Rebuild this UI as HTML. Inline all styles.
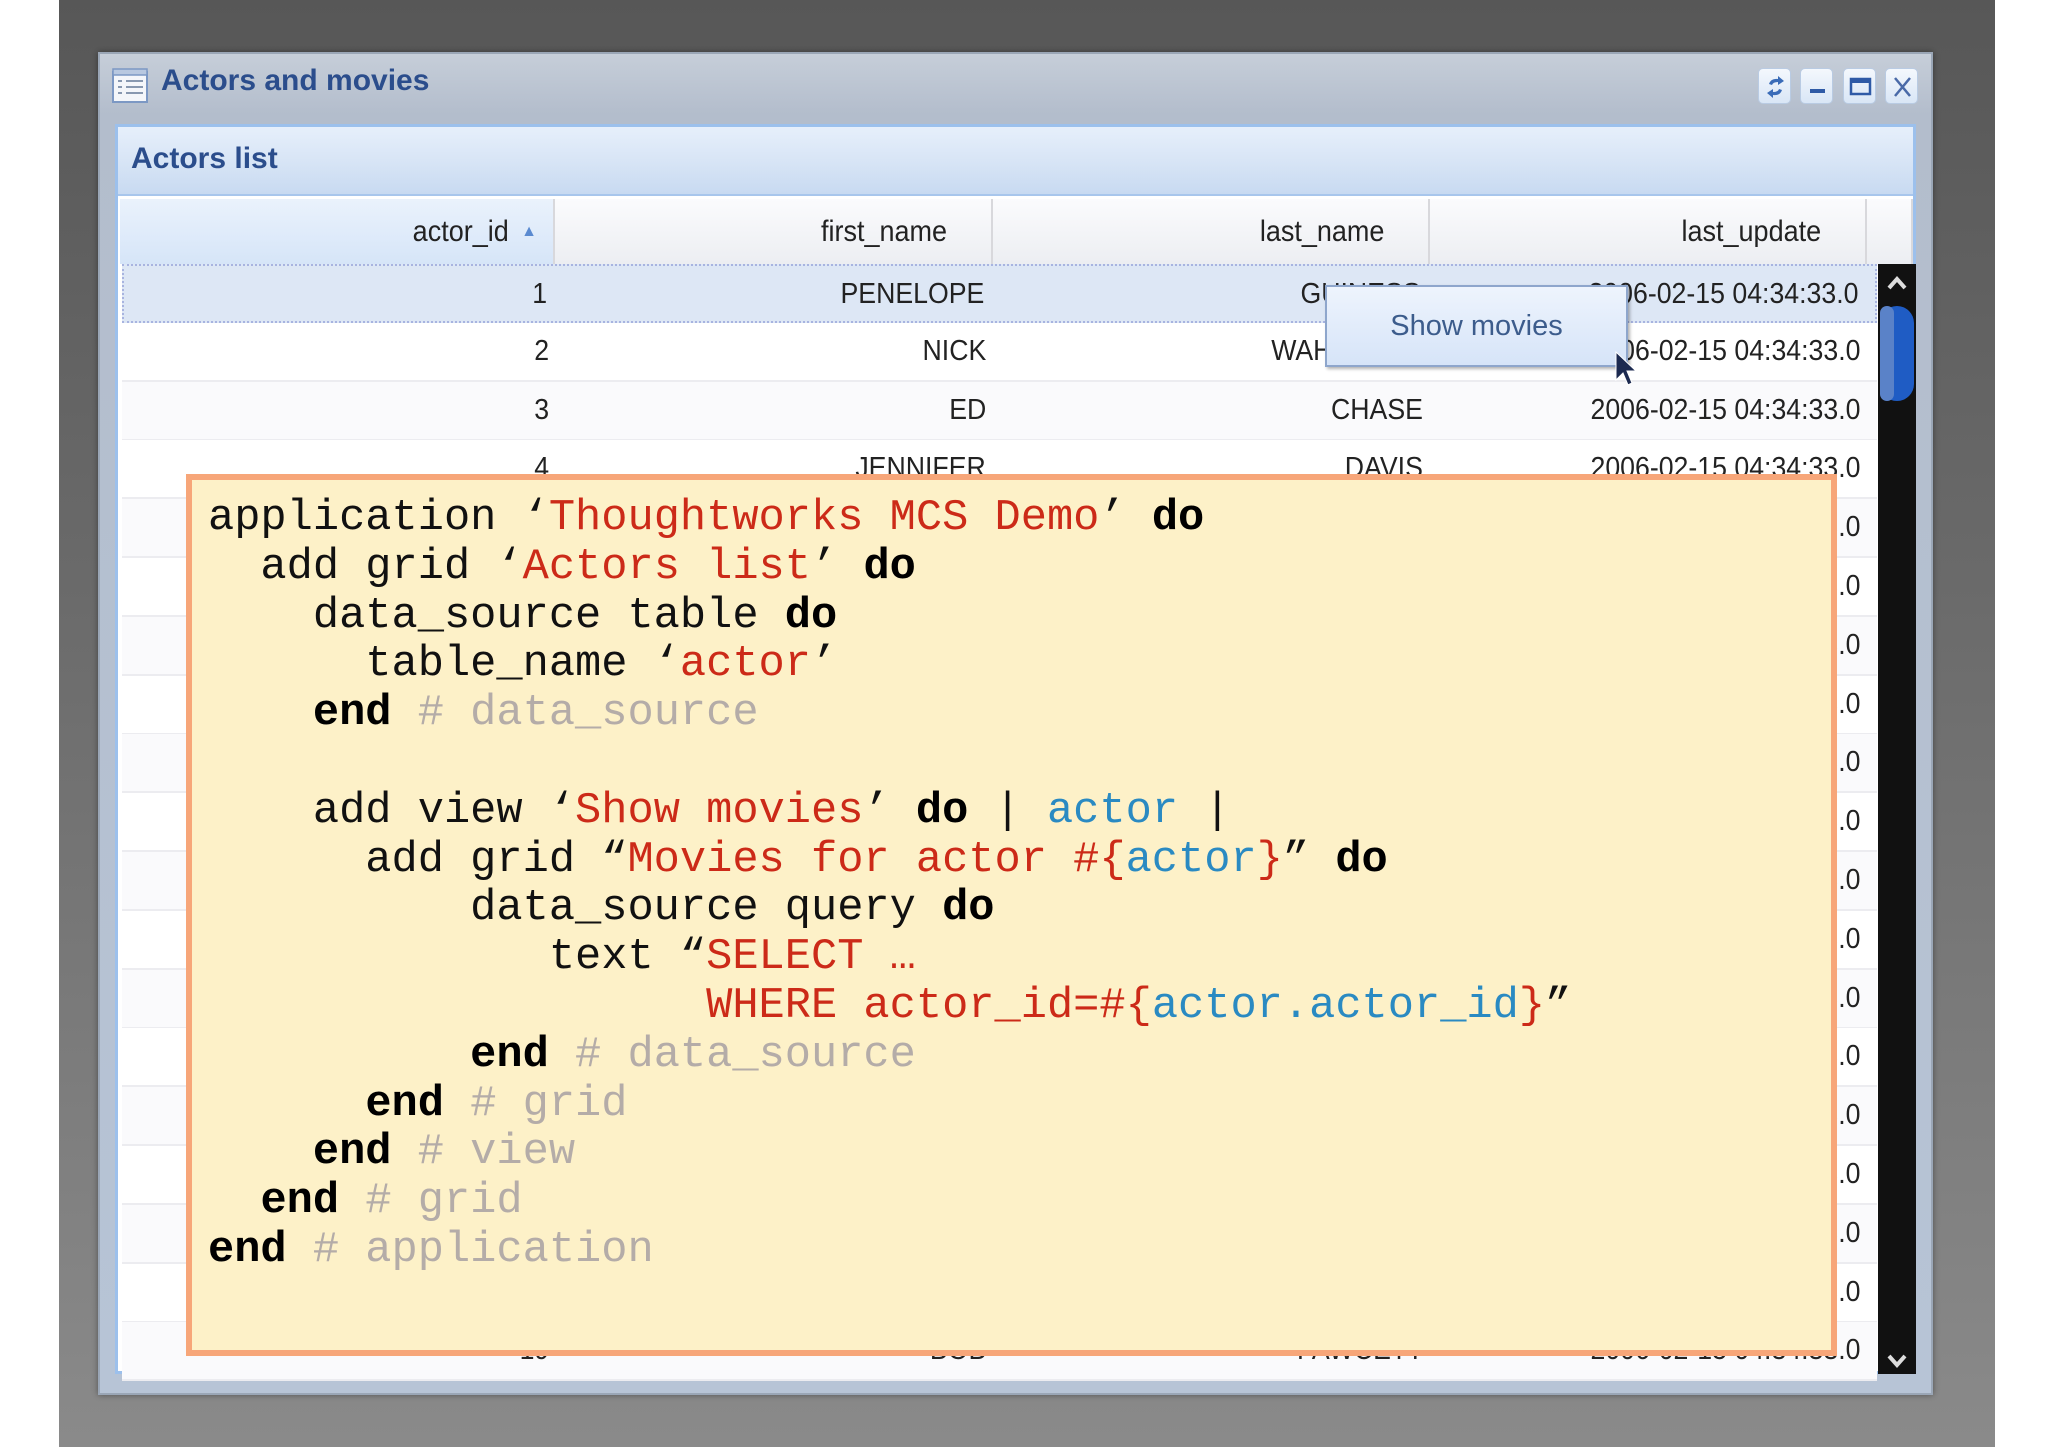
<!DOCTYPE html>
<html><head><meta charset="utf-8"><style>
*{margin:0;padding:0;box-sizing:border-box}
body{width:2048px;height:1447px;background:#fff;position:relative;overflow:hidden;font-family:"Liberation Sans",sans-serif}
.bg{position:absolute;left:59px;top:0;width:1936px;height:1447px;background:linear-gradient(#575757,#6a6a6a 40%,#8a8a8a)}
.win{position:absolute;left:98px;top:52px;width:1835px;height:1343px;background:linear-gradient(#c6ced9,#b3bdcc 60px,#b7c4d6);border:2px solid #9aa6b6;box-shadow:0 0 6px rgba(0,0,0,.4)}
.title{position:absolute;left:161px;top:64px;font-weight:bold;font-size:30px;color:#2b4d8c}
.panel{position:absolute;left:115px;top:124px;width:1801px;height:1250px;background:#fff;border:3px solid #9cc0ec}
.phead{position:absolute;left:0;top:0;width:100%;height:69px;background:linear-gradient(#e6effb,#d8e5f6 50%,#c8daf1);border-bottom:2px solid #a8c6ec}
.phead span{position:absolute;left:13px;top:15px;font-weight:bold;font-size:30px;color:#2b4d8c}
.col{position:absolute;top:72px;height:65px;background:linear-gradient(#fbfbfd,#eceef2);border-right:2px solid #d8d8dc;font-family:"Liberation Sans Narrow","Liberation Sans",sans-serif;font-size:30px;color:#222;text-align:right;padding-right:44px;line-height:65px}
.col i{font-style:normal;display:inline-block;transform:scaleX(.9);transform-origin:right}
.row{position:absolute;left:4px;width:1755px;height:59px;border-bottom:2px solid #ececf0;font-family:"Liberation Sans Narrow","Liberation Sans",sans-serif;font-size:29px;color:#222}
.row span{position:absolute;top:12px;text-align:right;transform:scaleX(.92);transform-origin:right;white-space:nowrap}
.code{position:absolute;left:186px;top:474px;width:1651px;height:882px;background:#fdf1c8;border:6px solid #f7a679}
pre{position:absolute;left:16px;top:15px;font-family:"Liberation Mono",monospace;font-size:43.7px;line-height:48.8px;color:#111}
b{font-weight:bold;color:#000}.s{color:#cc2a18}.c{color:#b4aca8}.v{color:#2a8ac2}
.btn{position:absolute;top:68px;width:33px;height:36px;border-radius:5px;background:linear-gradient(#f4f8fd,#d9e6f6);border:1px solid #b9cbe3}
</style></head><body>
<div class="bg"></div>
<div class="win"></div>
<svg style="position:absolute;left:111px;top:67px" width="40" height="38"><rect x="2" y="5" width="34" height="30" fill="#f4f6fa" stroke="#7c98c4" stroke-width="2"/><rect x="2" y="2" width="34" height="6" fill="#b8c8e0" stroke="#7c98c4" stroke-width="1.5"/><g stroke="#8898b0" stroke-width="2"><line x1="7" y1="14" x2="11" y2="14"/><line x1="7" y1="20" x2="11" y2="20"/><line x1="7" y1="26" x2="11" y2="26"/><line x1="15" y1="14" x2="32" y2="14"/><line x1="15" y1="20" x2="32" y2="20"/><line x1="15" y1="26" x2="32" y2="26"/></g></svg>
<div class="title">Actors and movies</div>
<div class="btn" style="left:1758px"><svg width="33" height="36"><path d="M10 15 Q12 9 19 10 L19 7 L25 12 L19 16 L19 13 Q14 13 13 16Z M23 21 Q21 27 14 26 L14 29 L8 24 L14 20 L14 23 Q19 23 20 20Z" fill="#3a6cb8"/></svg></div>
<div class="btn" style="left:1800px"><svg width="33" height="36"><rect x="9" y="20" width="15" height="4" fill="#2f5aa6"/></svg></div>
<div class="btn" style="left:1843px"><svg width="33" height="36"><rect x="7" y="10" width="19" height="15" fill="none" stroke="#2f5aa6" stroke-width="2.5"/><rect x="7" y="10" width="19" height="4" fill="#2f5aa6"/></svg></div>
<div class="btn" style="left:1885px"><svg width="33" height="36"><path d="M9 9 L24 27 M24 9 L9 27" stroke="#4a6aa8" stroke-width="2.5"/></svg></div>
<div class="panel">
 <div class="phead"><span>Actors list</span></div>
 <div class="col" style="left:2px;width:435px;background:linear-gradient(#eaf2fc,#d6e5f8)"><i>actor_id</i><span style="position:absolute;right:16px;top:0;font-size:16px;color:#5a8ad0">▲</span></div>
 <div class="col" style="left:437px;width:438px"><i>first_name</i></div>
 <div class="col" style="left:875px;width:437px"><i>last_name</i></div>
 <div class="col" style="left:1312px;width:437px"><i>last_update</i></div>
 <div class="col" style="left:1749px;width:46px;padding:0"></div>
 <div style="position:absolute;left:1760px;top:137px;width:38px;height:1110px;background:#111"><svg width="38" height="1110"><path d="M11 24 L19 15 L27 24" stroke="#ddd" stroke-width="4" fill="none"/><rect x="2" y="42" width="34" height="95" rx="17" fill="#1f5cc4"/><rect x="2" y="42" width="14" height="95" rx="7" fill="#5a82c8"/><path d="M11 1092 L19 1101 L27 1092" stroke="#ddd" stroke-width="4" fill="none"/></svg></div>
 <div id="rows"></div>
</div>
<div style="position:absolute;left:1325px;top:285px;width:303px;height:82px;background:linear-gradient(#eef4fd,#d6e4f8);border:2px solid #8ea6cc;box-shadow:2px 2px 3px rgba(0,0,0,.3);font-size:29px;color:#3c5c8c;text-align:center;line-height:78px;font-family:'Liberation Sans Narrow','Liberation Sans',sans-serif">Show movies</div>
<svg style="position:absolute;left:1614px;top:350px" width="24" height="40"><path d="M2 2 L2 30 L9 23 L14 35 L18 33 L13 21 L22 21Z" fill="#1c2a50" stroke="#fff" stroke-width="1"/></svg>
<div class="code"><pre>application ‘<span class="s">Thoughtworks MCS Demo</span>’ <b>do</b>
  add grid ‘<span class="s">Actors list</span>’ <b>do</b>
    data_source table <b>do</b>
      table_name ‘<span class="s">actor</span>’
    <b>end</b> <span class="c"># data_source</span>

    add view ‘<span class="s">Show movies</span>’ <b>do</b> | <span class="v">actor</span> |
      add grid “<span class="s">Movies for actor #{<span class="v">actor</span>}</span>” <b>do</b>
          data_source query <b>do</b>
             text “<span class="s">SELECT …</span>
                   <span class="s">WHERE actor_id=#{<span class="v">actor.actor_id</span>}</span>”
          <b>end</b> <span class="c"># data_source</span>
      <b>end</b> <span class="c"># grid</span>
    <b>end</b> <span class="c"># view</span>
  <b>end</b> <span class="c"># grid</span>
<b>end</b> <span class="c"># application</span></pre></div>
<script>
var d=[["1","PENELOPE","GUINESS"],["2","NICK","WAHLBERG"],["3","ED","CHASE"],["4","JENNIFER","DAVIS"],["5","JOHNNY","LOLLOBRIGIDA"],["6","BETTE","NICHOLSON"],["7","GRACE","MOSTEL"],["8","MATTHEW","JOHANSSON"],["9","JOE","SWANK"],["10","CHRISTIAN","GABLE"],["11","ZERO","CAGE"],["12","KARL","BERRY"],["13","UMA","WOOD"],["14","VIVIEN","BERGEN"],["15","CUBA","OLIVIER"],["16","FRED","COSTNER"],["17","HELEN","VOIGHT"],["18","DAN","TORN"],["19","BOB","FAWCETT"]];
var h="";for(var i=0;i<d.length;i++){var bg=i==0?"#dde7f5":(i%2?"#fff":"#fafafc");
h+='<div class="row" style="top:'+(137+i*58.8)+'px;background:'+bg+(i==0?';border:2px dotted #a8b4e0':'')+'"><span style="right:1328px">'+d[i][0]+'</span><span style="right:891px">'+d[i][1]+'</span><span style="right:454px">'+d[i][2]+'</span><span style="right:17px">2006-02-15 04:34:33.0</span></div>';}
document.getElementById("rows").innerHTML=h;
</script>
</body></html>
